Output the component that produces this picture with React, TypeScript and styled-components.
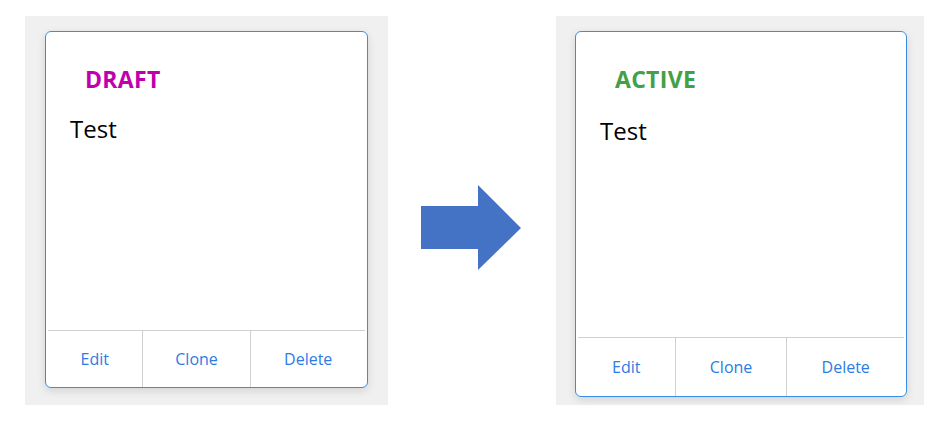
import React from "react";
import styled, { createGlobalStyle } from "styled-components";

const GlobalStyle = createGlobalStyle`
  html, body { margin: 0; padding: 0; background: #ffffff; }
  body { font-family: "Open Sans", "Noto Sans", Arial, sans-serif; }
`;

const Page = styled.div`
  display: flex;
  align-items: flex-start;
  padding: 16px 0 0 25px;
  width: 934px;
  height: 423px;
  box-sizing: border-box;
`;

const Panel = styled.div<{ $w: number; $padLeft: number }>`
  width: ${(p) => p.$w}px;
  height: 389px;
  box-sizing: border-box;
  background: #f0f0f0;
  padding: 15px 0 0 ${(p) => p.$padLeft}px;
  flex-shrink: 0;
`;

const Card = styled.div<{ $w: number; $h: number }>`
  width: ${(p) => p.$w}px;
  height: ${(p) => p.$h}px;
  box-sizing: border-box;
  background: #ffffff;
  border: 1px solid #3c8ce7;
  border-radius: 6px;
  box-shadow: 0 3px 8px rgba(0, 0, 0, 0.12);
  display: flex;
  flex-direction: column;
  overflow: hidden;
`;

const Body = styled.div`
  flex: 1;
  padding: 32px 24px 0 24px;
`;

const Status = styled.div<{ $color: string }>`
  margin-left: 15px;
  font-size: 23px;
  line-height: 30px;
  font-weight: 700;
  letter-spacing: 0.3px;
  color: ${(p) => p.$color};
`;

const Title = styled.div<{ $gap: number }>`
  margin-top: ${(p) => p.$gap}px;
  font-size: 24px;
  line-height: 33px;
  color: #000000;
`;

const Footer = styled.div<{ $h: number }>`
  height: ${(p) => p.$h}px;
  margin: 0 2px;
  border-top: 1px solid #d0d0d0;
  display: flex;
`;

const Action = styled.button`
  flex: 1 1 auto;
  background: transparent;
  border: none;
  border-left: 1px solid #d0d0d0;
  padding: 0;
  margin: 0;
  font-family: "Open Sans", "Noto Sans", Arial, sans-serif;
  font-size: 16px;
  color: #2d7be5;
  cursor: pointer;
  &:first-child { border-left: none; }
`;

const ArrowWrap = styled.div`
  width: 100px;
  height: 86px;
  margin: 169px 35px 0 33px;
  flex-shrink: 0;
`;

type CardProps = {
  status: string;
  color: string;
  w: number;
  h: number;
  footerH: number;
  gap: number;
};

const ItemCard = ({ status, color, w, h, footerH, gap }: CardProps) => (
  <Card $w={w} $h={h}>
    <Body>
      <Status $color={color}>{status}</Status>
      <Title $gap={gap}>Test</Title>
    </Body>
    <Footer $h={footerH}>
      <Action>Edit</Action>
      <Action>Clone</Action>
      <Action>Delete</Action>
    </Footer>
  </Card>
);

const Arrow = () => (
  <ArrowWrap>
    <svg width="100" height="86" viewBox="0 0 100 86">
      <polygon
        points="0,21 57,21 57,0 100,43 57,85 57,64 0,64"
        fill="#4472c4"
      />
    </svg>
  </ArrowWrap>
);

export default function App() {
  return (
    <>
      <GlobalStyle />
      <Page>
        <Panel $w={363} $padLeft={20}>
          <ItemCard status="DRAFT" color="#c000ac" w={323} h={357} footerH={56} gap={18} />
        </Panel>
        <Arrow />
        <Panel $w={368} $padLeft={19}>
          <ItemCard status="ACTIVE" color="#43a047" w={332} h={366} footerH={58} gap={20} />
        </Panel>
      </Page>
    </>
  );
}
